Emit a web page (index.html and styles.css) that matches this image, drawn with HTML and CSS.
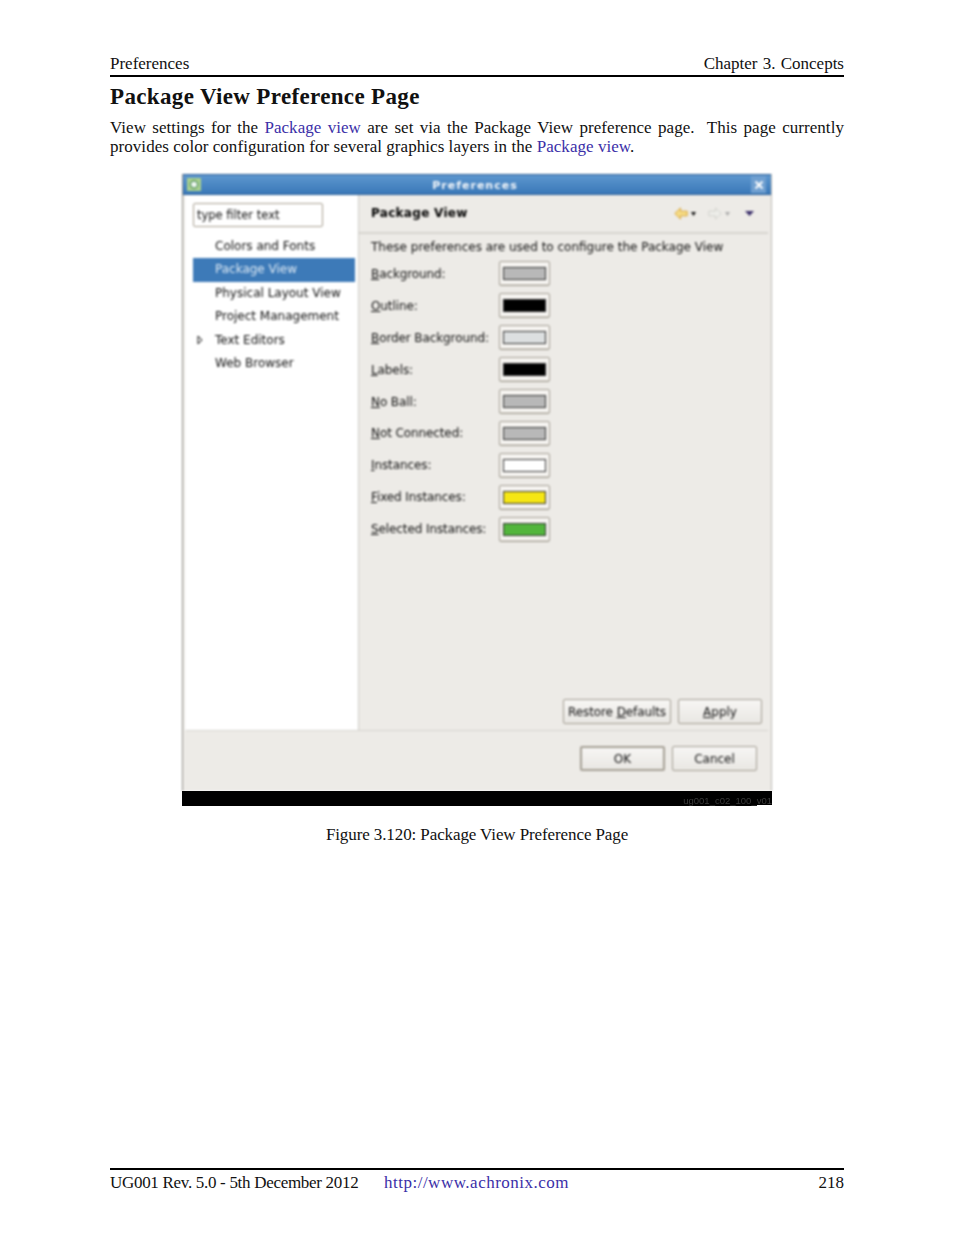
FILE: index.html
```html
<!DOCTYPE html>
<html lang="en">
<head>
<meta charset="utf-8">
<title>Package View Preference Page</title>
<link rel="stylesheet" href="styles.css">
</head>
<body>
<div class="page">
  <header class="run-head"><span>Preferences</span><span class="chapter">Chapter 3. Concepts</span></header>
  <h1>Package View Preference Page</h1>
  <p class="body-text">View settings for the <a>Package view</a> are set via the Package View preference page.&nbsp; This page currently provides color configuration for several graphics layers in the <a>Package view</a>.</p>
  <figure>
    <div class="shot">
      <div class="dialog">
        <div class="titlebar">
          <svg class="app-icon" width="14" height="13" viewBox="0 0 14 13"><rect width="14" height="13" fill="#a9d08e"/><circle cx="7" cy="6.500" r="3.600" fill="#eef6f0" stroke="#4f8f5a" stroke-width="1.200"/></svg>
          <span class="title">Preferences</span>
          <span class="close"><svg width="10" height="10" viewBox="0 0 10 10"><path d="M1.500 1.500l7 7M8.500 1.500l-7 7" stroke="#fff" stroke-width="2"/></svg></span>
        </div>
        <div class="main">
          <aside class="side">
            <div class="filter">type filter text</div>
            <ul class="tree">
              <li>Colors and Fonts</li>
              <li class="sel">Package View</li>
              <li>Physical Layout View</li>
              <li>Project Management</li>
              <li class="has-kids"><svg class="twist" width="6" height="10" viewBox="0 0 6 10"><path d="M1 1l4 4-4 4z" fill="#fff" stroke="#111"/></svg>Text Editors</li>
              <li>Web Browser</li>
            </ul>
          </aside>
          <section class="content">
            <div class="content-head">
              <strong>Package View</strong>
              <div class="nav">
                <svg width="14" height="13" viewBox="0 0 14 13"><path d="M.800 6.500L6.500 1v3.200h6.700v4.600H6.500V12z" fill="#f6dc85" stroke="#dba83c"/></svg>
                <svg class="drop" width="5" height="4" viewBox="0 0 5 4"><path d="M0 0h5L2.500 4z" fill="#111"/></svg>
                <svg class="nav-fwd" width="14" height="13" viewBox="0 0 14 13"><path d="M13.200 6.500L7.500 1v3.200H.800v4.600h6.700V12z" fill="#eeeeea" stroke="#d2d2cd"/></svg>
                <svg class="drop" width="5" height="4" viewBox="0 0 5 4"><path d="M0 0h5L2.500 4z" fill="#aaa"/></svg>
                <svg class="nav-menu" width="9" height="5" viewBox="0 0 9 5"><path d="M0 0h9L4.500 5z" fill="#3b2f6b"/></svg>
              </div>
            </div>
            <p class="intro">These preferences are used to configure the Package View</p>
            <div class="rows">
              <div class="row"><label><u>B</u>ackground:</label><span class="swatch"><i class="c-grey"></i></span></div>
              <div class="row"><label><u>O</u>utline:</label><span class="swatch"><i class="c-black"></i></span></div>
              <div class="row"><label><u>B</u>order Background:</label><span class="swatch"><i class="c-pale"></i></span></div>
              <div class="row"><label><u>L</u>abels:</label><span class="swatch"><i class="c-black"></i></span></div>
              <div class="row"><label><u>N</u>o Ball:</label><span class="swatch"><i class="c-grey"></i></span></div>
              <div class="row"><label><u>N</u>ot Connected:</label><span class="swatch"><i class="c-grey"></i></span></div>
              <div class="row"><label><u>I</u>nstances:</label><span class="swatch"><i class="c-white"></i></span></div>
              <div class="row"><label><u>F</u>ixed Instances:</label><span class="swatch"><i class="c-yellow"></i></span></div>
              <div class="row"><label><u>S</u>elected Instances:</label><span class="swatch"><i class="c-green"></i></span></div>
            </div>
            <div class="page-btns">
              <span class="btn restore"><span>Restore <u>D</u>efaults</span></span>
              <span class="btn apply"><span><u>A</u>pply</span></span>
            </div>
          </section>
        </div>
        <div class="dialog-btns">
          <span class="btn ok">OK</span>
          <span class="btn cancel">Cancel</span>
        </div>
      </div>
      <div class="blackbar"><span>ug001_c02_100_v01</span></div>
    </div>
    <figcaption>Figure 3.120: Package View Preference Page</figcaption>
  </figure>
  <footer class="run-foot">
    <span class="rev">UG001 Rev. 5.0 - 5th December 2012</span>
    <a class="url">http://www.achronix.com</a>
    <span class="pg">218</span>
  </footer>
</div>
</body>
</html>
```
FILE: styles.css
```css
* { box-sizing: border-box; }
html, body { margin: 0; padding: 0; background: #fff; }
body { font-family: "Liberation Serif", serif; color: #111; }
.page { width: 954px; height: 1235px; padding: 54px 110px 0 110px; display: flex; flex-direction: column; }
.run-head { display: flex; justify-content: space-between; font-size: 17px; line-height: 20px; border-bottom: 2px solid #000; height: 23px; }
.chapter { word-spacing: 1px; }
h1 { margin: 6px 0 0; font-size: 23px; line-height: 28px; font-weight: 700; letter-spacing: .35px; color: #111; }
.body-text { margin: 8px 0 0; font-size: 17px; line-height: 18.500px; text-align: justify; letter-spacing: .05px; }
a { color: #3b2fa8; }
figure { margin: 18px 0 0; }
.shot { width: 590px; height: 632px; margin-left: 72px; display: flex; flex-direction: column; }
.dialog { flex: 1; background: #edebe7; border-left: 1px solid #8f8d88; border-right: 1px solid #bdbbb6; font-family: "DejaVu Sans", sans-serif; font-size: 12px; color: #111; display: flex; flex-direction: column; filter: blur(.8px); }
.titlebar { height: 21px; background: linear-gradient(#5d97cf, #3a78b8); border-top: 1px solid #2d5d94; border-bottom: 1px solid #2c5f96; display: flex; align-items: center; padding: 0 5px 0 4px; }
.title { flex: 1; text-align: center; color: #f4f7fa; font-weight: 700; font-size: 11px; line-height: 17px; letter-spacing: 1px; padding: 2px 2px 0 0; }
.close { width: 15px; height: 17px; background: #6f9fd0; display: flex; align-items: center; justify-content: center; }
.main { height: 535px; display: flex; }
.side { width: 174px; background: #fff; margin-left: 2px; border-right: 1px solid #cfcdc8; padding: 8px 0 0 8px; }
.filter { width: 130px; height: 24px; border: 1px solid #a8a091; border-radius: 2px; padding-left: 3px; font-size: 11.500px; line-height: 22px; color: #111; }
.tree { list-style: none; margin: 7.500px 0 0; padding: 0; }
.tree li { height: 23.500px; line-height: 23px; padding-left: 22px; position: relative; white-space: nowrap; color: #111; }
.tree li.sel { background: #3d7ab8; color: #dde9f4; width: 162px; }
.twist { position: absolute; left: 4px; top: 6px; }
.content { flex: 1; display: flex; flex-direction: column; padding: 0 3px 0 0; }
.content-head { height: 39px; border-bottom: 2px solid #d6d4cf; display: flex; justify-content: space-between; align-items: center; padding: 0 12px; }
.content-head strong { font-size: 12px; letter-spacing: .3px; color: #000; padding-bottom: 1px; }
.nav { display: flex; align-items: center; gap: 3px; padding-right: 2px; }
.nav-fwd { margin-left: 9px; }
.nav-menu { margin-left: 12px; }
.intro { margin: 5px 0 0 12px; font-size: 12px; line-height: 16px; }
.rows { margin: 3px 0 0 12px; }
.row { height: 31.900px; display: flex; align-items: center; }
.row label { width: 128px; white-space: nowrap; letter-spacing: -.1px; }
.swatch { width: 51px; height: 25px; background: #f6f4f1; border: 1px solid #a29d92; border-radius: 2px; box-shadow: inset 0 -1px 0 #d4d0c8; padding: 5px 3px; display: block; }
.swatch i { display: block; height: 100%; border: 1px solid #333; }
.c-grey { background: #b8b8b8; }
.c-black { background: #000; }
.c-pale { background: #dcdfe0; }
.c-white { background: #fff; }
.c-yellow { background: #f5e614; }
.c-green { background: #52b53c; }
.page-btns { margin-top: auto; height: 31px; padding-right: 6px; display: flex; justify-content: flex-end; gap: 7px; }
.btn { display: flex; align-items: center; justify-content: center; height: 25px; background: linear-gradient(#f7f6f4, #e9e7e3); border: 1px solid #a29d92; border-radius: 2px; white-space: nowrap; }
.restore { width: 108px; letter-spacing: -.1px; }
.apply { width: 84px; }
.dialog-btns { border-top: 1px solid #d6d4cf; flex: 1; margin: 0 3px; padding: 15px 11px 0 0; display: flex; justify-content: flex-end; gap: 7px; }
.ok { width: 85px; border: 2px solid #a5a095; }
.cancel { width: 85px; }
.blackbar { height: 15px; background: #000; display: flex; justify-content: flex-end; align-items: flex-end; position: relative; }
.blackbar::after { content: ""; position: absolute; right: 0; bottom: 0; width: 15px; height: 1px; background: #fff; }
.blackbar span { font-family: "Liberation Sans", sans-serif; font-size: 9.500px; line-height: 11px; color: #3a3a3a; filter: blur(.4px); }
figcaption { margin-top: 19px; text-align: center; font-size: 17px; line-height: 20px; letter-spacing: -.1px; }
.run-foot { margin-top: auto; margin-bottom: 42px; border-top: 2px solid #000; padding-top: 3px; font-size: 17px; line-height: 20px; display: flex; }
.rev { width: 274px; letter-spacing: -.3px; }
.url { flex: 1; letter-spacing: .5px; }
```
